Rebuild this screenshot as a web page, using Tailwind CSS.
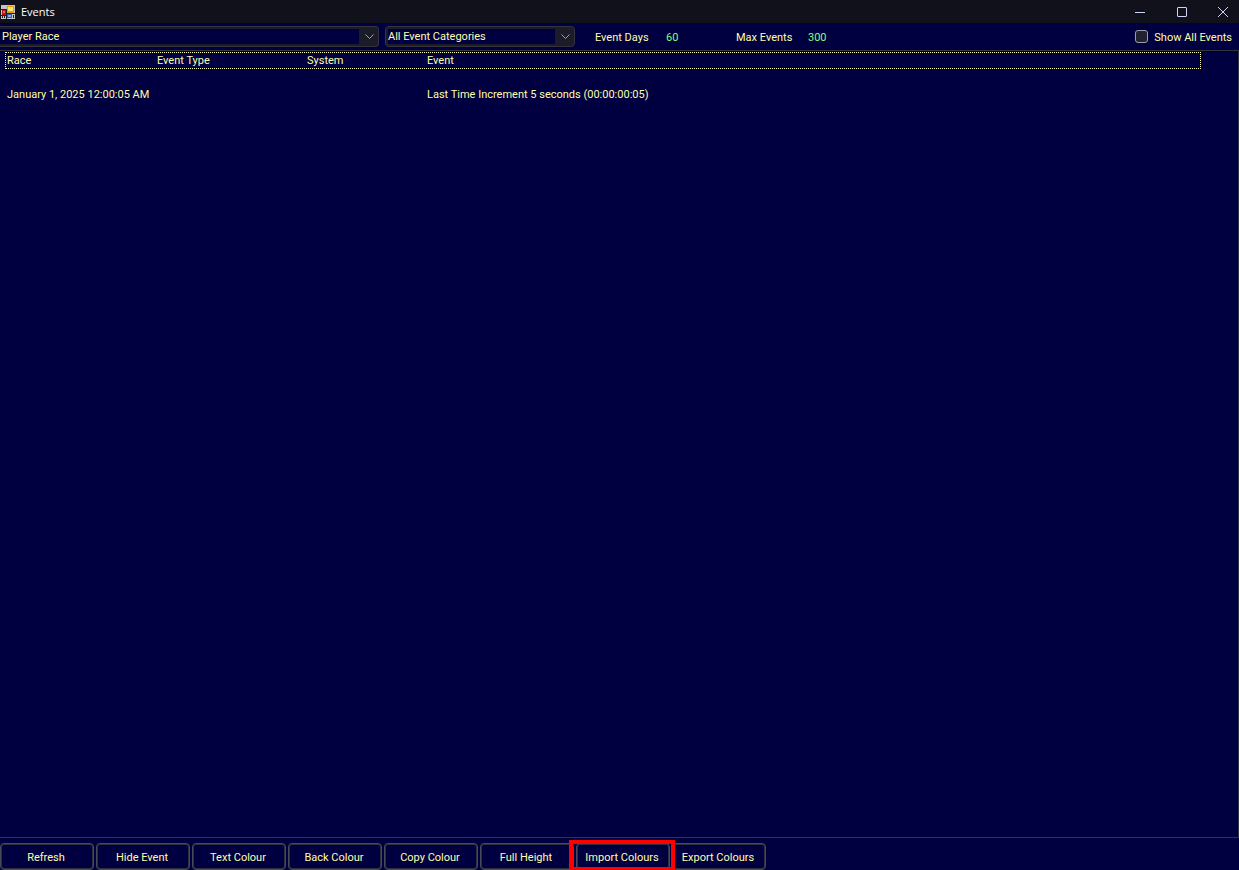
<!DOCTYPE html>
<html lang="en">
<head>
<meta charset="utf-8">
<title>Events</title>
<script src="https://cdn.jsdelivr.net/npm/@tailwindcss/browser@4"></script>
</head>
<body class="flex h-screen flex-col overflow-hidden bg-[#000040] font-['Roboto',sans-serif] text-[11px] leading-4 text-[#ffffa8]">
<header class="flex h-[23px] shrink-0 items-center bg-[#11111b] text-white">
  <svg class="ml-px size-[14px]" viewBox="0 0 14 14" shape-rendering="crispEdges" aria-hidden="true">
    <path fill="#c4c4c4" d="M0 0h14v14H0z"/>
    <path fill="#202026" d="M0 4h5v1H0zM5 4h1v10H5zM0 10h5v1H0zM1 11h1v2H1zM3 11h1v2H3zM6 8h8v1H6zM12 10h1v3h-1z"/>
    <path fill="#b01818" d="M1 5h4v5H1z"/><path fill="#f26a50" d="M2 6h2v2H2z"/>
    <path fill="#e8a000" d="M6 1h7v7H6z"/><path fill="#ffe274" d="M7 2h5v4H7z"/>
    <path fill="#2060c8" d="M6 9h5v4H6z"/><path fill="#78b0ff" d="M7 10h3v2H7z"/>
  </svg>
  <h1 class="ml-1.5 font-['Open_Sans',sans-serif] text-[11px]">Events</h1>
  <div class="ml-auto flex h-full text-[#cdd6f4]">
    <button aria-label="Minimize" class="grid w-[42px] place-items-center"><svg class="size-3" viewBox="0 0 12 12" fill="none" stroke="currentColor"><path d="M1 6.500h10"/></svg></button>
    <button aria-label="Maximize" class="grid w-[42px] place-items-center"><svg class="size-3" viewBox="0 0 12 12" fill="none" stroke="currentColor"><rect x="1.500" y="1.500" width="9" height="9" rx=".5"/></svg></button>
    <button aria-label="Close" class="grid w-9 place-items-center pl-1"><svg class="size-3" viewBox="0 0 12 12" fill="none" stroke="currentColor"><path d="M1 1l10 10M11 1L1 11"/></svg></button>
  </div>
</header>
<form class="flex h-[27px] shrink-0 items-center">
  <div class="relative h-[21px] w-[379px] rounded-r-sm border border-l-0 border-[#33333d] bg-[#1c1c28] py-[2px] pr-[19px]">
    <select aria-label="Race" class="block h-[15px] w-full appearance-none bg-[#000040] pl-[2px] leading-[15px]"><option>Player Race</option></select>
    <svg class="pointer-events-none absolute top-[7px] right-[4px] h-[6px] w-[9px]" viewBox="0 0 9 6" fill="none" stroke="#a0a0a8"><path d="M.5.500l4 4 4-4"/></svg>
  </div>
  <div class="relative ml-1.5 h-[21px] w-[190px] rounded-sm border border-[#33333d] bg-[#1c1c28] py-[2px] pr-[19px] pl-[2px]">
    <select aria-label="Event category" class="block h-[15px] w-full appearance-none bg-[#000040] leading-[15px]"><option>All Event Categories</option></select>
    <svg class="pointer-events-none absolute top-[7px] right-[4px] h-[6px] w-[9px]" viewBox="0 0 9 6" fill="none" stroke="#a0a0a8"><path d="M.5.500l4 4 4-4"/></svg>
  </div>
  <label for="days" class="ml-5 w-[71px] pt-0.5">Event Days</label>
  <input id="days" value="60" class="w-[70px] bg-transparent pt-0.5 text-[#80ff80]">
  <label for="max" class="w-[72px] pt-0.5">Max Events</label>
  <input id="max" value="300" class="w-[70px] bg-transparent pt-0.5 text-[#80ff80]">
  <label class="mr-[7px] ml-auto flex items-center gap-1.5"><input type="checkbox" class="size-[13px] appearance-none rounded-[3px] border border-[#9d9da5] bg-[#22222e]"><span class="pt-0.5">Show All Events</span></label>
</form>
<main class="min-h-0 flex-1 border-y border-r border-[#33333d] pt-px pl-[5px]">
  <table class="w-[calc(100%-37px)] table-fixed border-collapse text-left">
    <colgroup><col class="w-[152px]"><col class="w-[150px]"><col class="w-[120px]"><col></colgroup>
    <thead><tr class="h-[17px] outline-1 -outline-offset-1 outline-dotted outline-[#ffffa8]"><th class="pt-px pl-0.5 font-normal">Race</th><th class="pt-px font-normal">Event Type</th><th class="pt-px font-normal">System</th><th class="pt-px font-normal">Event</th></tr></thead>
    <tbody><tr class="h-[17px]"><td colspan="4"></td></tr>
    <tr class="h-[17px]"><td class="pt-px pl-0.5 whitespace-nowrap">January 1, 2025 12:00:05 AM</td><td></td><td></td><td class="pt-px">Last Time Increment 5 seconds (00:00:00:05)</td></tr></tbody>
  </table>
</main>
<footer class="flex h-8 shrink-0 gap-0.5 pt-[5px]">
  <button class="h-[27px] w-[94px] rounded-[4px] border border-[#4a4a56] pt-0.5 pr-0.5 inset-ring inset-ring-[#30303c]">Refresh</button>
  <button class="h-[27px] w-[94px] rounded-[4px] border border-[#4a4a56] pt-0.5 pr-0.5 inset-ring inset-ring-[#30303c]">Hide Event</button>
  <button class="h-[27px] w-[94px] rounded-[4px] border border-[#4a4a56] pt-0.5 pr-0.5 inset-ring inset-ring-[#30303c]">Text Colour</button>
  <button class="h-[27px] w-[94px] rounded-[4px] border border-[#4a4a56] pt-0.5 pr-0.5 inset-ring inset-ring-[#30303c]">Back Colour</button>
  <button class="h-[27px] w-[94px] rounded-[4px] border border-[#4a4a56] pt-0.5 pr-0.5 inset-ring inset-ring-[#30303c]">Copy Colour</button>
  <button class="h-[27px] w-[94px] rounded-[4px] border border-[#4a4a56] pt-0.5 pr-0.5 inset-ring inset-ring-[#30303c]">Full Height</button>
  <div class="relative">
    <button class="h-[27px] w-[94px] rounded-[4px] border border-[#4a4a56] pt-0.5 pr-0.5 inset-ring inset-ring-[#30303c]">Import Colours</button>
    <div class="pointer-events-none absolute -top-[3px] -right-[5px] bottom-0 -left-[7px] z-10 border-4 border-b-[3px] border-[#ff0000]"></div>
  </div>
  <button class="h-[27px] w-[94px] rounded-[4px] border border-[#4a4a56] pt-0.5 pr-0.5 inset-ring inset-ring-[#30303c]">Export Colours</button>
</footer>
</body>
</html>
